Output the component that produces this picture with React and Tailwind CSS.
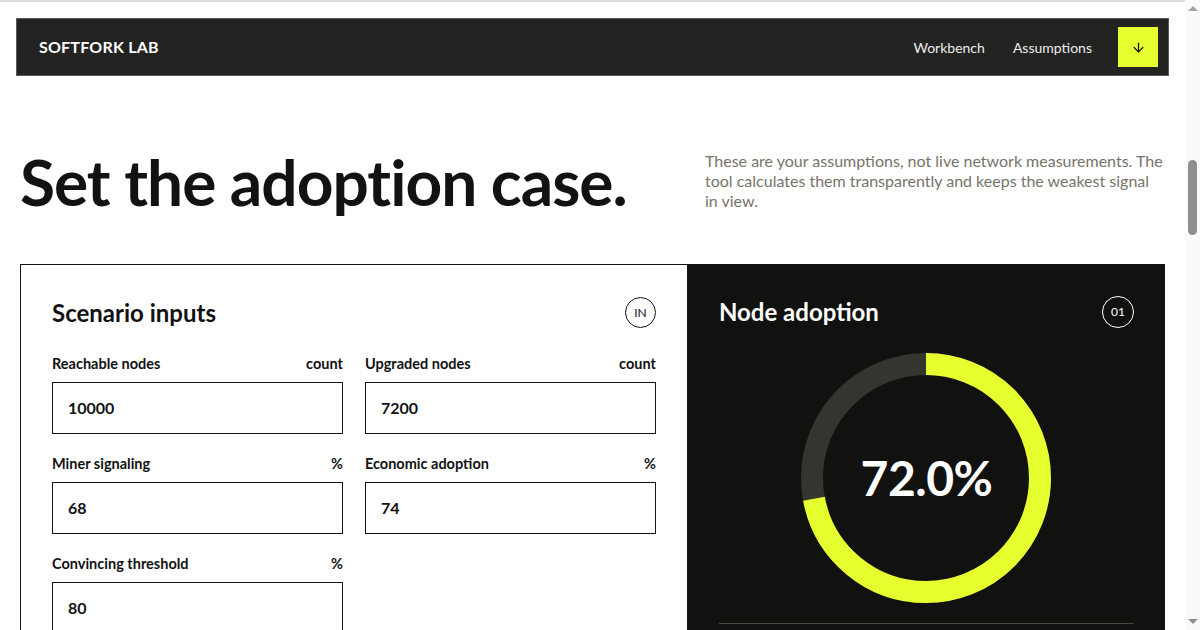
import React from 'react';
import { ArrowDown } from 'lucide-react';

const FIELDS = [
  { label: 'Reachable nodes', unit: 'count', value: '10000' },
  { label: 'Upgraded nodes', unit: 'count', value: '7200' },
  { label: 'Miner signaling', unit: '%', value: '68' },
  { label: 'Economic adoption', unit: '%', value: '74' },
  { label: 'Convincing threshold', unit: '%', value: '80' },
];

function Donut({ pct }) {
  const r = 114;
  const c = 2 * Math.PI * r;
  return (
    <div className="relative w-[250px] h-[250px]">
      <svg width="250" height="250" viewBox="0 0 250 250">
        <circle cx="125" cy="125" r={r} fill="none" stroke="#35352f" strokeWidth="22" />
        <circle
          cx="125"
          cy="125"
          r={r}
          fill="none"
          stroke="#e6ff2f"
          strokeWidth="22"
          strokeDasharray={`${(c * pct) / 100} ${c}`}
          transform="rotate(-90 125 125)"
        />
      </svg>
      <div className="absolute inset-0 flex items-center justify-center text-[48px] font-bold text-white tracking-[-0.5px]">
        {pct.toFixed(1)}%
      </div>
    </div>
  );
}

// page is scrolled in the reference; draw the scrollbar strip
function Scrollbar() {
  return (
    <div className="fixed top-0 right-0 h-screen w-[15px] bg-[#fafafa]">
      <div className="absolute top-[6px] left-[3px] w-0 h-0 border-l-[5px] border-r-[5px] border-b-[5px] border-l-transparent border-r-transparent border-b-[#a3a3a3]" />
      <div className="absolute top-[160px] left-[3px] w-[9px] h-[75px] rounded-full bg-[#8f8f8f]" />
      <div className="absolute bottom-[6px] left-[3px] w-0 h-0 border-l-[5px] border-r-[5px] border-t-[5px] border-l-transparent border-r-transparent border-t-[#8f8f8f]" />
    </div>
  );
}

export default function App() {
  return (
    <div className="min-h-[1400px] bg-white text-[#121212]" style={{ fontFamily: 'Lato, "Noto Sans", sans-serif' }}>
      <div className="mr-[15px] border-t-2 border-[#dcdcdc]">
        <header className="mx-[16px] mt-[16px] h-[58px] bg-[#232321] border border-[#5a5a58] flex items-center pl-[22px] pr-[10px]">
          <div className="text-white font-bold text-[16px] tracking-[0.2px]">SOFTFORK LAB</div>
          <nav className="ml-auto flex items-center gap-[26px] text-[14px] text-[#ececec]">
            <span className="mr-[2px]">Workbench</span>
            <span>Assumptions</span>
            <button className="w-[40px] h-[40px] bg-[#e6ff2f] flex items-center justify-center text-[#111]">
              <ArrowDown size={15} strokeWidth={2} />
            </button>
          </nav>
        </header>

        <main className="px-[20px]">
          <section className="flex items-start justify-between pt-[76px] pb-[50px]">
            <h1 className="text-[64px] leading-[64px] font-bold tracking-[-1px] mt-[-2px]">Set the adoption case.</h1>
            <p className="w-[460px] text-[16px] leading-[20px] text-[#77736b] mt-[-1px]">
              These are your assumptions, not live network measurements. The tool calculates them transparently and keeps the weakest signal in view.
            </p>
          </section>

          <section className="grid grid-cols-[7fr_5fr]">
            <div className="border border-[#121212] px-[31px] pt-[32px] pb-[40px]">
              <div className="flex items-center justify-between h-[31px] mb-[28px]">
                <h2 className="text-[24px] font-bold">Scenario inputs</h2>
                <span className="w-[31px] h-[31px] rounded-full border border-[#121212] flex items-center justify-center text-[12px]">IN</span>
              </div>
              <div className="grid grid-cols-2 gap-x-[22px] gap-y-[22px]">
                {FIELDS.map((f) => (
                  <label key={f.label} className="block">
                    <div className="flex justify-between text-[14.5px] font-bold leading-[16px] mb-[10px]">
                      <span>{f.label}</span>
                      <span>{f.unit}</span>
                    </div>
                    <div className="h-[52px] border border-[#121212] flex items-center px-[15px] text-[16px] font-bold">
                      {f.value}
                    </div>
                  </label>
                ))}
              </div>
            </div>

            <div className="bg-[#111110] px-[31px] pt-[32px] pb-[40px] text-white">
              <div className="flex items-center justify-between h-[31px] mb-[26px]">
                <h2 className="text-[24px] font-bold">Node adoption</h2>
                <span className="w-[32px] h-[32px] rounded-full border border-white flex items-center justify-center text-[12px]">01</span>
              </div>
              <div className="flex justify-center">
                <Donut pct={72} />
              </div>
              <div className="mt-[20px] border-t border-[#48483f] h-[120px]" />
            </div>
          </section>
        </main>
      </div>
      <Scrollbar />
    </div>
  );
}
